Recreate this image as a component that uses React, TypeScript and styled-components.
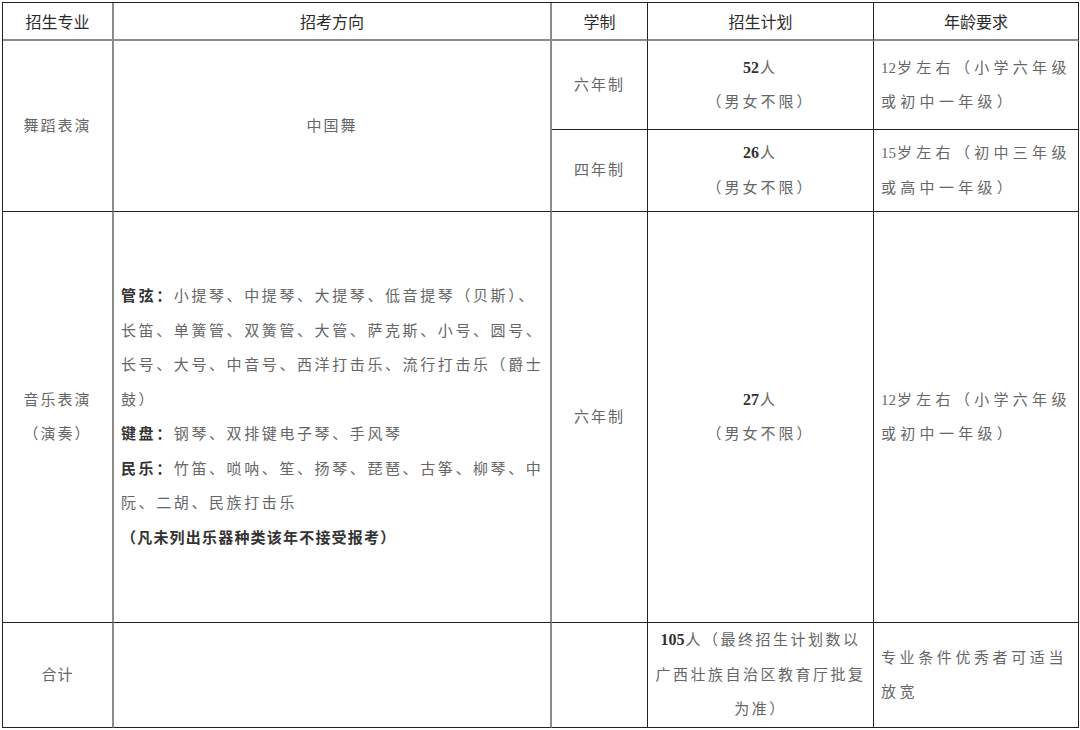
import React from 'react';
import styled, { createGlobalStyle } from 'styled-components';

const GlobalStyle = createGlobalStyle`
  html, body {
    margin: 0;
    padding: 0;
    background: #ffffff;
  }
  body {
    font-family: "Liberation Serif", "Noto Sans CJK SC", serif;
  }
`;

const Sheet = styled.div`
  display: grid;
  grid-template-columns: 111px 438px 96px 226px 205px;
  grid-template-rows: 38px 89px 82px 411px 105px;
  margin: 2px 0 0 2px;
  width: max-content;
  border-left: 1px solid #222;
  border-top: 1px solid #222;
`;

const Cell = styled.div<{
  $col: number;
  $row: number;
  $rowSpan?: number;
  $soft?: boolean;
  $head?: boolean;
  $left?: boolean;
  $spacing?: number;
}>`
  box-sizing: border-box;
  grid-column: ${(p) => p.$col};
  grid-row: ${(p) => p.$row} / span ${(p) => p.$rowSpan ?? 1};
  display: flex;
  flex-direction: column;
  justify-content: center;
  align-items: ${(p) => (p.$left ? 'flex-start' : 'center')};
  padding: 0 ${(p) => (p.$left ? '7px' : '4px')};
  border-right: ${(p) => (p.$soft ? '2px solid #8c8c8c' : '1px solid #222')};
  border-bottom: ${(p) => (p.$head ? '2px solid #8c8c8c' : '1px solid #222')};
  color: ${(p) => (p.$head ? '#2b2b2b' : '#666666')};
  font-family: ${(p) =>
    p.$head
      ? '"Noto Sans CJK SC", "Liberation Sans", sans-serif'
      : '"Liberation Serif", "Noto Sans CJK SC", serif'};
  font-size: ${(p) => (p.$head ? '16px' : '15px')};
  letter-spacing: ${(p) => p.$spacing ?? 0}px;
  line-height: 34.5px;
  white-space: nowrap;
`;

const Line = styled.span`
  display: block;
`;

const Strong = styled.b`
  font-weight: 700;
  color: #333;
`;

const Digits = styled.span<{ $bold?: boolean }>`
  letter-spacing: 0;
  font-size: ${(p) => (p.$bold ? '16px' : '15px')};
  font-weight: ${(p) => (p.$bold ? 700 : 400)};
  color: ${(p) => (p.$bold ? '#333' : 'inherit')};
  margin-right: 1px;
`;

const Note = styled.span`
  display: block;
  font-weight: 700;
  color: #333;
  letter-spacing: 1.2px;
`;

const headers = ['招生专业', '招考方向', '学制', '招生计划', '年龄要求'];

const Plan: React.FC<{ count: string }> = ({ count }) => (
  <>
    <Line>
      <Digits $bold>{count}</Digits>人
    </Line>
    <Line>（男女不限）</Line>
  </>
);

const Age: React.FC<{ years: string; first: string; second: string }> = ({ years, first, second }) => (
  <>
    <Line>
      <Digits>{years}</Digits>
      {first}
    </Line>
    <Line>{second}</Line>
  </>
);

const App: React.FC = () => {
  return (
    <>
      <GlobalStyle />
      <Sheet>
        {headers.map((h, i) => (
          <Cell key={h} $col={i + 1} $row={1} $head $soft={i < 2}>
            {h}
          </Cell>
        ))}

        {/* 舞蹈表演 */}
        <Cell $col={1} $row={2} $rowSpan={2} $soft $spacing={2}>
          舞蹈表演
        </Cell>
        <Cell $col={2} $row={2} $rowSpan={2} $soft $spacing={2}>
          中国舞
        </Cell>
        <Cell $col={3} $row={2} $spacing={2}>
          六年制
        </Cell>
        <Cell $col={4} $row={2} $spacing={3}>
          <Plan count="52" />
        </Cell>
        <Cell $col={5} $row={2} $left $spacing={4.3}>
          <Age years="12" first="岁左右（小学六年级" second="或初中一年级）" />
        </Cell>
        <Cell $col={3} $row={3} $spacing={2}>
          四年制
        </Cell>
        <Cell $col={4} $row={3} $spacing={3}>
          <Plan count="26" />
        </Cell>
        <Cell $col={5} $row={3} $left $spacing={4.3}>
          <Age years="15" first="岁左右（初中三年级" second="或高中一年级）" />
        </Cell>

        {/* 音乐表演 */}
        <Cell $col={1} $row={4} $soft $spacing={2}>
          <Line>音乐表演</Line>
          <Line>（演奏）</Line>
        </Cell>
        <Cell $col={2} $row={4} $soft $left $spacing={2.6}>
          <Line>
            <Strong>管弦：</Strong>小提琴、中提琴、大提琴、低音提琴（贝斯）、
          </Line>
          <Line>长笛、单簧管、双簧管、大管、萨克斯、小号、圆号、</Line>
          <Line>长号、大号、中音号、西洋打击乐、流行打击乐（爵士</Line>
          <Line>鼓）</Line>
          <Line>
            <Strong>键盘：</Strong>钢琴、双排键电子琴、手风琴
          </Line>
          <Line>
            <Strong>民乐：</Strong>竹笛、唢呐、笙、扬琴、琵琶、古筝、柳琴、中
          </Line>
          <Line>阮、二胡、民族打击乐</Line>
          <Note>（凡未列出乐器种类该年不接受报考）</Note>
        </Cell>
        <Cell $col={3} $row={4} $spacing={2}>
          六年制
        </Cell>
        <Cell $col={4} $row={4} $spacing={3}>
          <Plan count="27" />
        </Cell>
        <Cell $col={5} $row={4} $left $spacing={4.3}>
          <Age years="12" first="岁左右（小学六年级" second="或初中一年级）" />
        </Cell>

        {/* 合计 */}
        <Cell $col={1} $row={5} $soft $spacing={1}>
          合计
        </Cell>
        <Cell $col={2} $row={5} $soft />
        <Cell $col={3} $row={5} />
        <Cell $col={4} $row={5} $spacing={2.5}>
          <Line>
            <Digits $bold>105</Digits>人（最终招生计划数以
          </Line>
          <Line>广西壮族自治区教育厅批复</Line>
          <Line>为准）</Line>
        </Cell>
        <Cell $col={5} $row={5} $left $spacing={3.6}>
          <Line>专业条件优秀者可适当</Line>
          <Line>放宽</Line>
        </Cell>
      </Sheet>
    </>
  );
};

export default App;
